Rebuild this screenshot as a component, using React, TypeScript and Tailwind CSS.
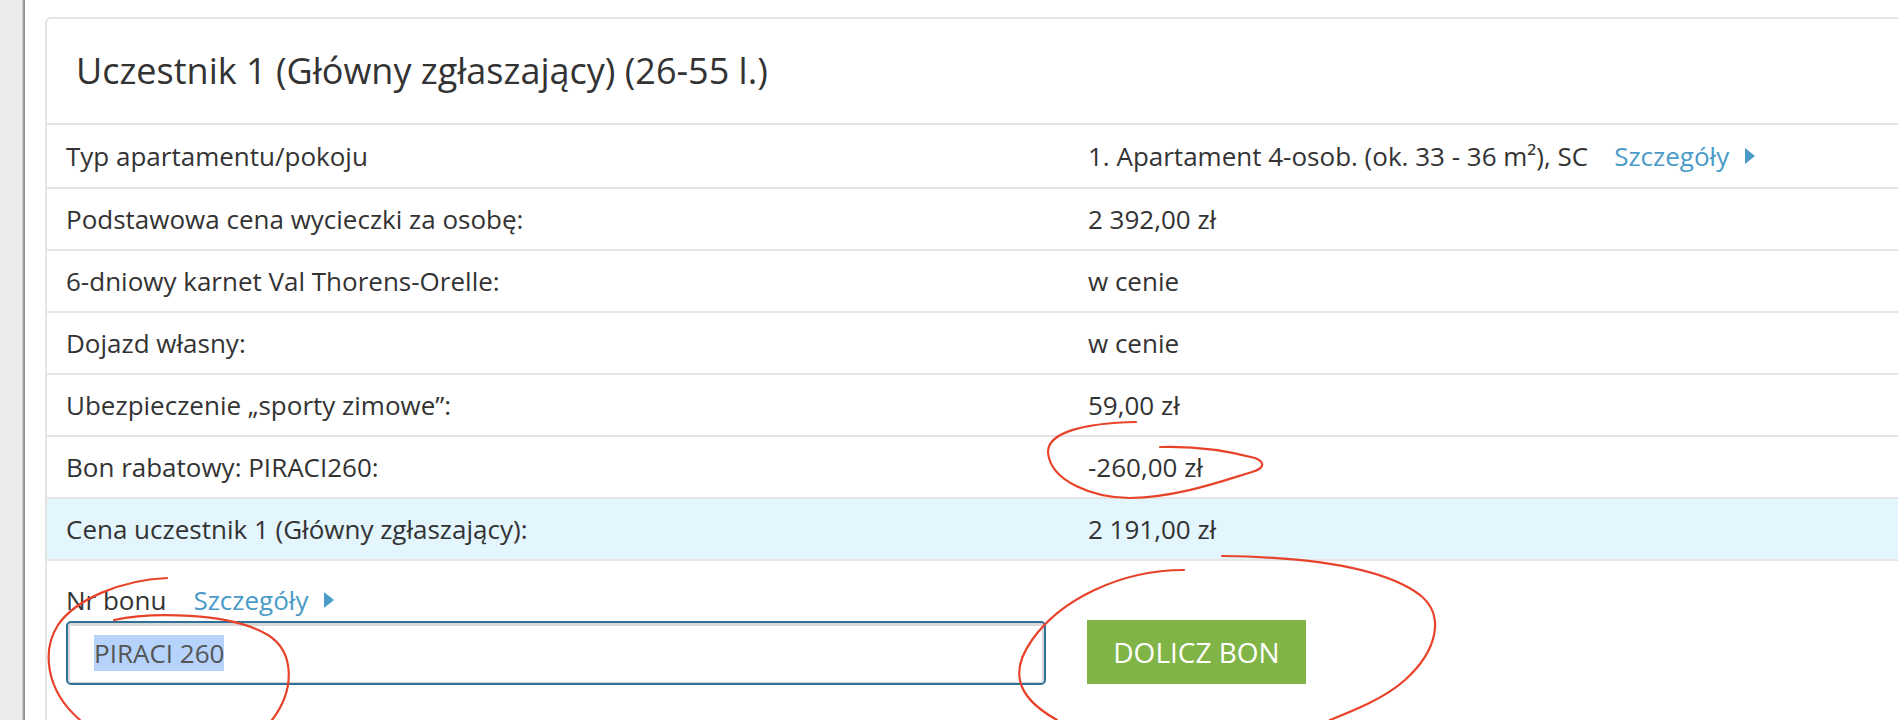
const rows = [
  { label: "Podstawowa cena wycieczki za osobę:", value: "2 392,00 zł" },
  { label: "6-dniowy karnet Val Thorens-Orelle:", value: "w cenie" },
  { label: "Dojazd własny:", value: "w cenie" },
  { label: "Ubezpieczenie „sporty zimowe”:", value: "59,00 zł" },
  { label: "Bon rabatowy: PIRACI260:", value: "-260,00 zł" },
]

function Details() {
  return (
    <a className="inline-flex items-center text-[#4a9bc7]">
      Szczegóły
      <svg width="10" height="16" viewBox="0 0 10 16" className="ml-[16px]">
        <path d="M0 0 L10 8 L0 16 Z" fill="#4a9bc7" />
      </svg>
    </a>
  )
}

function Row({ label, children, blue, tall }: { label: string; children: React.ReactNode; blue?: boolean; tall?: boolean }) {
  return (
    <div className={`flex items-center border-b-[2px] border-[#e5e5e5] ${tall ? "h-[64px]" : "h-[62px]"} ${blue ? "bg-[#e3f5fd]" : ""}`}>
      <div className="w-[1041px] shrink-0 pl-[19px]">{label}</div>
      <div className="flex items-center">{children}</div>
    </div>
  )
}

export default function App() {
  return (
    <div className="relative h-[720px] overflow-hidden bg-white font-['Open_Sans',sans-serif] text-[26px] text-[#333]">
      <div className="flex h-full">
        <div className="w-[25px] shrink-0 bg-[linear-gradient(to_right,#ececec_86%,#8f8f8f_96%)]" />
        <div className="flex-1 pl-[20px] pt-[17px]">
          <div className="rounded-tl-[6px] border-l-[2px] border-t-[2px] border-[#e5e5e5] pb-[40px]">
            <div className="flex h-[106px] items-center border-b-[2px] border-[#e5e5e5] pl-[29px] text-[36px]">
              Uczestnik 1 (Główny zgłaszający) (26-55 l.)
            </div>
            <Row label="Typ apartamentu/pokoju" tall>
              <span>1. Apartament 4-osob. (ok. 33 - 36 m²), SC</span>
              <span className="ml-[26px]"><Details /></span>
            </Row>
            {rows.map((r) => (
              <Row key={r.label} label={r.label}>{r.value}</Row>
            ))}
            <Row label="Cena uczestnik 1 (Główny zgłaszający):" blue>2 191,00 zł</Row>
            <div className="flex pl-[19px] pt-[18px]">
              <div className="w-[980px] shrink-0">
                <div className="flex h-[42px] items-center">
                  <span>Nr bonu</span>
                  <span className="ml-[27px]"><Details /></span>
                </div>
                <div className="flex h-[64px] items-center rounded-[5px] border-[2px] border-[#2f7099] pl-[26px] shadow-[inset_0_1px_0_2px_#d8d8d8] text-[#555]">
                  <span className="bg-[#b5d3fb] leading-[36px]">PIRACI 260</span>
                </div>
              </div>
              <button className="ml-[41px] mt-[41px] h-[64px] w-[219px] bg-[#80b446] text-[28px] text-white">DOLICZ BON</button>
            </div>
          </div>
        </div>
      </div>
      <svg className="pointer-events-none absolute inset-0" width="1898" height="720" fill="none" stroke="#e8432a" strokeWidth="2.2" strokeLinecap="round">
        <path d="M1136 422 C1085 423 1048 432 1048 452 C1050 482 1095 498 1130 498 C1180 497 1225 480 1252 472 C1265 468 1265 462 1255 458 C1225 450 1190 446 1160 447" />
        <path d="M1184 570 C1120 570 1060 600 1032 640 C1012 668 1012 695 1057 720" />
        <path d="M1222 556 C1300 557 1380 565 1420 595 C1445 615 1438 650 1405 680 C1385 698 1355 710 1330 720" />
        <path d="M167 578 C120 580 75 600 58 625 C42 650 45 690 80 720" />
        <path d="M114 620 C150 612 230 612 268 635 C295 652 295 690 272 720" />
      </svg>
    </div>
  )
}
